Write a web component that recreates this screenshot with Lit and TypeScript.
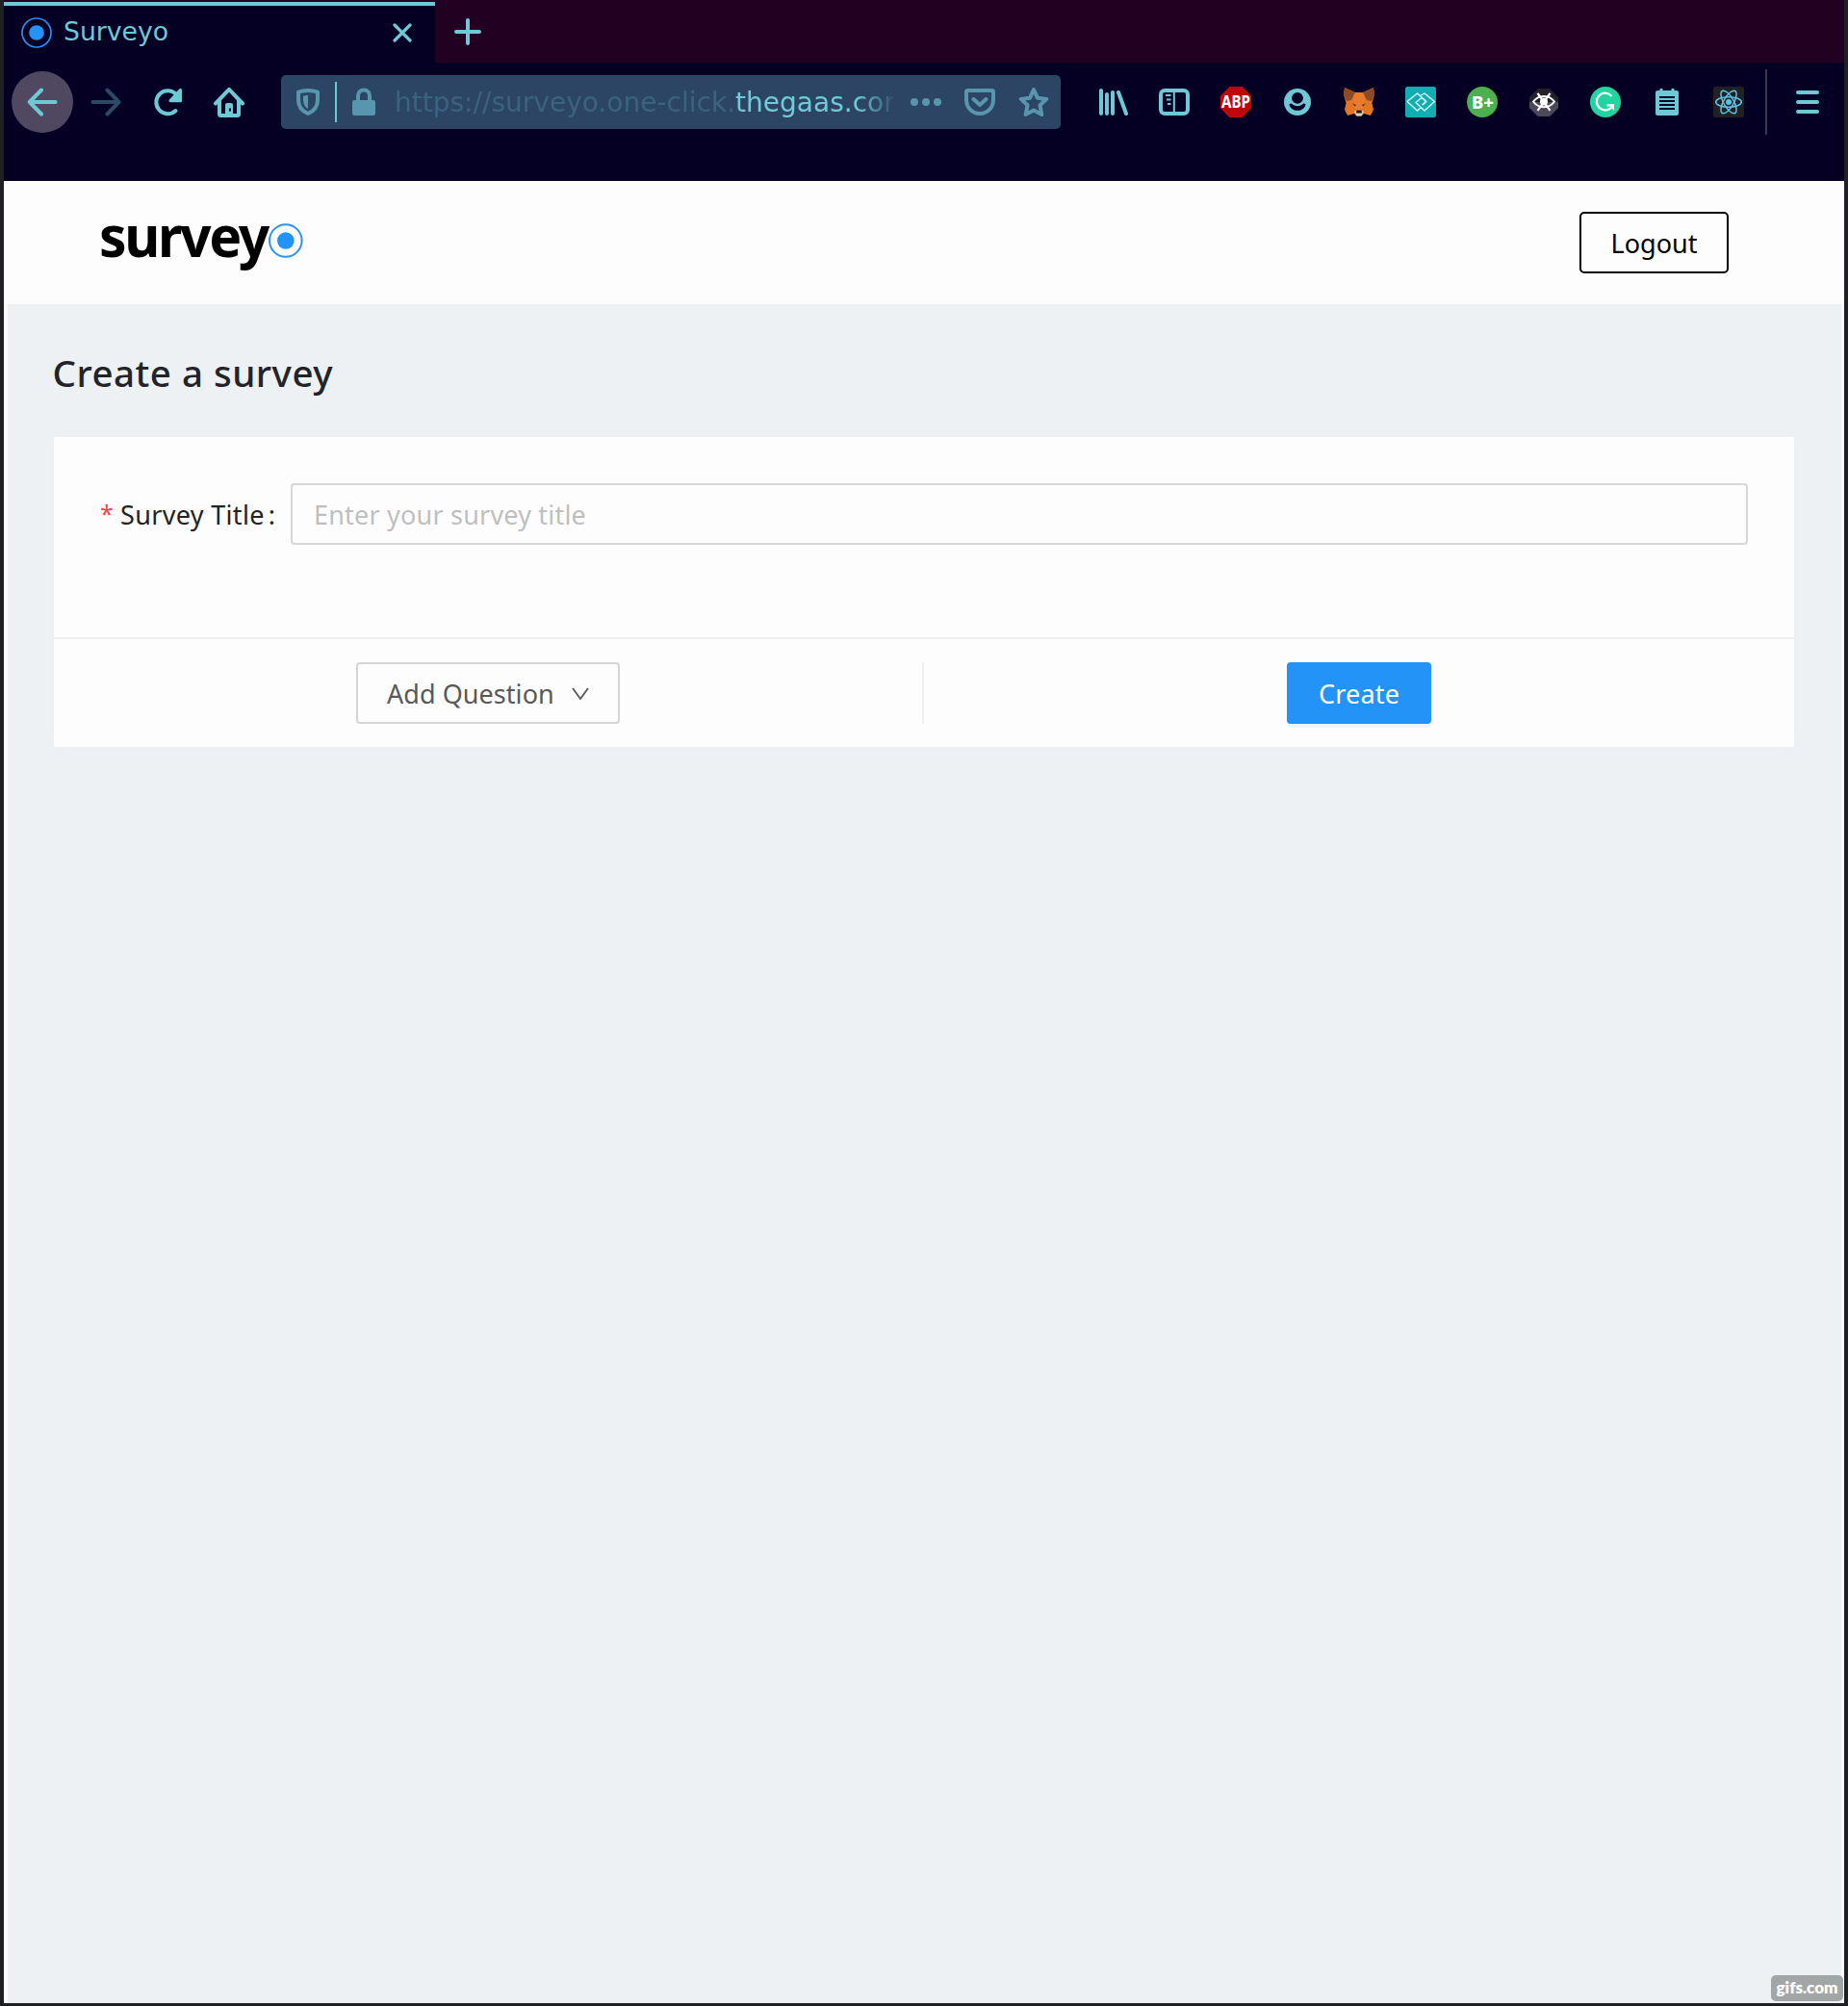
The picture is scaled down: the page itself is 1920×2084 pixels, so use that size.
import { LitElement, html, css, svg } from "lit";
import { customElement } from "lit/decorators.js";

const icon = (body: unknown) =>
  html`<svg width="32" height="32" viewBox="0 0 32 32" fill="none">${body}</svg>`;

const target = svg`<circle cx="16" cy="16" r="15" stroke="#2c8df0" stroke-width="1.700"/><circle cx="16" cy="16" r="7.800" fill="#2393f8"/>`;

const icons = {
  back: svg`<path d="M29.500 16H3.500M15 3.500L2.700 16L15 28.500" stroke="currentColor" stroke-width="4" stroke-linecap="round" stroke-linejoin="round"/>`,
  forward: svg`<path d="M2.500 16H28.500M17.500 3.500L29.500 16L17.500 28.500" stroke="currentColor" stroke-width="4" stroke-linecap="round" stroke-linejoin="round"/>`,
  reload: svg`<path d="M24.500 25A12 12 0 1 1 25.500 8.500" stroke="currentColor" stroke-width="4" stroke-linecap="round"/><path d="M31 3.500v11.500a1.200 1.200 0 0 1-1.200 1.200H19a1.600 1.600 0 0 1-1.100-2.700L28.200 2.500a1.600 1.600 0 0 1 2.800 1z" fill="currentColor"/>`,
  home: svg`<path d="M2 17.500L16 2.800L30 17.500" stroke="currentColor" stroke-width="4" stroke-linecap="round" stroke-linejoin="round"/><path d="M6 14v14.500a1.500 1.500 0 0 0 1.500 1.500h17a1.500 1.500 0 0 0 1.500-1.500V14" stroke="currentColor" stroke-width="4"/><path d="M12 30V19a2 2 0 0 1 2-2h4a2 2 0 0 1 2 2v11z" fill="currentColor"/><rect x="16" y="22.500" width="2" height="3" fill="#050023"/>`,
  shield: svg`<path d="M16 4c4 0 7.500.700 10 1.700v8.300c0 7-4 11.500-10 14-6-2.500-10-7-10-14V5.700C8.500 4.700 12 4 16 4z" stroke="currentColor" stroke-width="4" stroke-linejoin="round"/><path d="M16 9v14c-3-1.800-5-4.500-5-9V9.700C12.500 9.200 14 9 16 9z" fill="currentColor"/>`,
  lock: svg`<path d="M10 16V9.500a6 6 0 0 1 12 0V16" stroke="currentColor" stroke-width="4"/><rect x="4" y="14" width="24" height="16" rx="2" fill="currentColor"/>`,
  dots: svg`<circle cx="4" cy="16" r="4" fill="currentColor"/><circle cx="16" cy="16" r="4" fill="currentColor"/><circle cx="28" cy="16" r="4" fill="currentColor"/>`,
  pocket: svg`<path d="M3.500 4h25a1.500 1.500 0 0 1 1.500 1.500V14a14 14 0 0 1-28 0V5.500A1.500 1.500 0 0 1 3.500 4z" stroke="currentColor" stroke-width="4"/><path d="M9.500 13L16 19L22.500 13" stroke="currentColor" stroke-width="4" stroke-linecap="round" stroke-linejoin="round"/>`,
  star: svg`<path d="M16 3l4 8.800 9.300 1.100-6.800 6.400 1.800 9.700-8.300-4.500-8.300 4.500 1.800-9.700-6.800-6.400 9.300-1.100z" stroke="currentColor" stroke-width="4" stroke-linejoin="round"/>`,
  library: svg`<path d="M4 4v24M10 8v20M16 6v22M22 6l8 22" stroke="currentColor" stroke-width="4" stroke-linecap="round"/>`,
  sidebar: svg`<rect x="2" y="4" width="28" height="24" rx="4" stroke="currentColor" stroke-width="4"/><path d="M15.800 4v24" stroke="currentColor" stroke-width="2"/><path d="M7 9h5.500M8 13.500h4.500M9 18h3.500" stroke="currentColor" stroke-width="2"/>`,
  abp: svg`<path d="M9.500 0h13L32 9.500v13L22.500 32h-13L0 22.500v-13z" fill="#bd0808"/><text x="16" y="22" text-anchor="middle" textLength="30" lengthAdjust="spacingAndGlyphs" font-family="Noto Sans, sans-serif" font-weight="700" font-size="17" fill="#fff">ABP</text>`,
  account: svg`<circle cx="16" cy="16" r="14" fill="currentColor"/><circle cx="16" cy="11.800" r="5.900" fill="#050023"/><path d="M7.500 18.200c1.200-1.200 2.500-.800 3.500.300 3 2.300 7 2.300 10 0 1-1.100 2.300-1.500 3.500-.300-.500 4-4 6.600-8.500 6.600s-8-2.600-8.500-6.600z" fill="#050023"/>`,
  fox: svg`<path d="M1 1l11 5h8l11-5 1 7-2.500 9L31 24l-3 6-7-2-2.500 2.500h-5L11 28l-7 2-3-6 1.500-7L0 8z" fill="#e37625"/><path d="M1 1l11 5-4 8-5 1-3-7zM31 1L20 6l4 8 5 1 3-7z" fill="#8d4a26"/><path d="M12 6h8l2 11-3 8h-6l-3-8z" fill="#e87c2c"/><path d="M9 17.500l4 1.500-1 1.500zM23 17.500L19 19l1 1.500z" fill="#3a2a28"/><path d="M11 26l3-1.500h4L21 26l-2.500 4.500h-5z" fill="#d8cfc6"/><path d="M13.500 24.500h5l.500 3h-6z" fill="#1d1714"/>`,
  link: svg`<rect width="32" height="32" rx="2.500" fill="#12adb0"/><path d="M16.500 21.500L12.500 25 2 15.500 12.500 7 22 15.500 18 19M15.500 9.500L20 7l10.500 8.500L20 25l-9-8.500 6-5 4.500 4-4 3.500" stroke="#d5fbff" stroke-width="1.400" stroke-linejoin="round"/>`,
  bplus: svg`<circle cx="16" cy="16" r="16" fill="#4caf50"/><text x="16.500" y="22.500" text-anchor="middle" textLength="23" lengthAdjust="spacingAndGlyphs" font-family="Noto Sans, sans-serif" font-weight="800" font-size="18" fill="#fff">B+</text>`,
  eye: svg`<path d="M10 2h12l9 9v11l-9 9H10l-9-9V11z" fill="#24202b"/><path d="M1 16h30v6l-9 9H10l-9-9z" fill="#4c4859"/><path d="M5 15.500c5.500-7.500 16.500-7.500 22 0-5.500 7.500-16.500 7.500-22 0z" stroke="#fff" stroke-width="2"/><circle cx="16" cy="15.500" r="4" fill="#fff"/><path d="M9.500 6.800L22.500 24.800M22.500 6.800L9.500 24.800" stroke="#fff" stroke-width="2.300"/>`,
  grammar: svg`<circle cx="16" cy="16" r="16" fill="#21d5a1"/><path d="M22.500 10A8.800 8.800 0 1 0 23.500 19.500H17.500" stroke="#fff" stroke-width="2.200"/><path d="M18.500 18.200H25V25z" fill="#fff"/>`,
  notes: svg`<path d="M6 4h2.500V2h3v2h9V2h3v2H26a2 2 0 0 1 2 2v22a2 2 0 0 1-2 2H6a2 2 0 0 1-2-2V6a2 2 0 0 1 2-2z" fill="currentColor"/><path d="M8 11h16M8 15h16M8 19h16M8 23h16" stroke="#050023" stroke-width="2"/>`,
  react: svg`<rect width="32" height="32" rx="2.500" fill="#202124"/><g stroke="#61c0e0" stroke-width="1.500"><ellipse cx="16" cy="16" rx="13.300" ry="5.200"/><ellipse cx="16" cy="16" rx="13.300" ry="5.200" transform="rotate(60 16 16)"/><ellipse cx="16" cy="16" rx="13.300" ry="5.200" transform="rotate(120 16 16)"/></g><circle cx="16" cy="16" r="3" fill="#61c0e0"/>`,
  menu: svg`<path d="M6 6h20M6 16h20M6 26h20" stroke="currentColor" stroke-width="4" stroke-linecap="round"/>`,
};

@customElement("browser-chrome")
class BrowserChrome extends LitElement {
  static styles = css`
    :host { display: block; color: #6fc8d6; font-family: "DejaVu Sans", sans-serif; }
    svg { display: block; flex: none; }
    .tabs { display: flex; height: 65px; padding-top: 2px; box-sizing: border-box; background: #220022; }
    .tab { display: flex; align-items: center; width: 448px; height: 63px; box-sizing: border-box; border-top: 4px solid #6fc8d6; background: #050023; padding: 0 24px 3px 18px; }
    .name { flex: 1; margin-left: 12px; font-size: 26.67px; line-height: 32px; padding-bottom: 2px; }
    .plus { margin: 17px 0 0 20px; }
    .bar { background: #050023; height: 123px; padding-top: 1px; box-sizing: border-box; }
    .row { display: flex; align-items: center; height: 80px; padding-left: 8px; }
    .slot { display: grid; place-items: center; width: 64px; height: 64px; flex: none; }
    .round { border-radius: 50%; background: #4f4860; margin-right: 2px; }
    .dim { color: #2b4a66; }
    .url { display: flex; align-items: center; box-sizing: border-box; width: 810px; height: 56px; margin: 0 22px; padding-left: 12px; border-radius: 5px; background: #2c4565; color: #5796ac; }
    .sep { width: 2px; height: 42px; background: #6fc8d6; margin: 0 12px; }
    .addr { width: 518px; margin: 2px 6px 0 16px; overflow: hidden; white-space: nowrap; font-size: 28px; line-height: 40px; letter-spacing: 0.01px; color: #3a6380; -webkit-mask-image: linear-gradient(90deg, #000 480px, transparent 522px); mask-image: linear-gradient(90deg, #000 480px, transparent 522px); }
    .addr b { font-weight: 400; color: #70cad8; }
    .act { display: grid; place-items: center; width: 56px; }
    .rule { width: 2px; height: 68px; background: #383850; margin: 0 10px 0 6px; }
  `;
  render() {
    const ext = ["library", "sidebar", "abp", "account", "fox", "link", "bplus", "eye", "grammar", "notes", "react"] as const;
    return html`
      <div class="tabs">
        <div class="tab">
          ${icon(target)}
          <span class="name">Surveyo</span>
          <svg width="20" height="20" viewBox="0 0 20 20"><path d="M2 2L18 18M18 2L2 18" stroke="currentColor" stroke-width="3.200" stroke-linecap="round"/></svg>
        </div>
        <svg class="plus" width="28" height="28" viewBox="0 0 28 28"><path d="M14 2V26M2 14H26" stroke="currentColor" stroke-width="4" stroke-linecap="round"/></svg>
      </div>
      <div class="bar"><div class="row">
        <div class="slot round">${icon(icons.back)}</div>
        <div class="slot dim">${icon(icons.forward)}</div>
        <div class="slot">${icon(icons.reload)}</div>
        <div class="slot">${icon(icons.home)}</div>
        <div class="url">
          ${icon(icons.shield)}
          <div class="sep"></div>
          ${icon(icons.lock)}
          <div class="addr">https://surveyo.one-click.<b>thegaas.com</b></div>
          <div class="act">${icon(icons.dots)}</div>
          <div class="act">${icon(icons.pocket)}</div>
          <div class="act">${icon(icons.star)}</div>
        </div>
        ${ext.map((n) => html`<div class="slot">${icon(icons[n])}</div>`)}
        <div class="rule"></div>
        <div class="slot">${icon(icons.menu)}</div>
      </div></div>
    `;
  }
}

@customElement("survey-form")
class SurveyForm extends LitElement {
  static styles = css`
    :host { display: block; background: #fdfdfd; box-shadow: 0 0 10px 2px #eeeef2; }
    .field { display: flex; height: 208px; box-sizing: border-box; padding: 48px 48px 0 48px; }
    .star { width: 21px; color: #f0454a; font-size: 25px; line-height: 62px; }
    .label { color: #222326; line-height: 66px; letter-spacing: 0.33px; width: 177px; white-space: nowrap; }
    .label i { font-style: normal; margin-left: 4px; }
    .box { flex: 1; box-sizing: border-box; height: 64px; border: 2px solid #d7d7d7; border-radius: 4px; padding-left: 22px; line-height: 62px; color: #bfbfbf; letter-spacing: 0.2px; }
    .actions { display: grid; grid-template-columns: 902px 1fr; height: 114px; box-sizing: border-box; border-top: 2px solid #efefef; padding: 24px 0; }
    .half { display: flex; justify-content: center; }
    .half + .half { border-left: 2px solid #efefef; }
    .btn { box-sizing: border-box; height: 64px; line-height: 62px; border: 2px solid #d5d5d5; border-radius: 4px; white-space: nowrap; }
    .add { display: flex; width: 274px; padding-left: 30px; color: #595959; letter-spacing: 0.05px; }
    .add svg { margin: 24px 0 0 18px; }
    .create { width: 150px; text-align: center; border-color: #2393f8; background: #2393f8; color: #fff; letter-spacing: 0.2px; box-shadow: 0 4px 0 #eef5f7; }
  `;
  render() {
    return html`
      <div class="field">
        <span class="star">*</span>
        <span class="label">Survey Title<i>:</i></span>
        <div class="box">Enter your survey title</div>
      </div>
      <div class="actions">
        <div class="half"><div class="btn add">Add Question
          <svg width="18" height="14" viewBox="0 0 18 14"><path d="M1 1L9 12L17 1" fill="none" stroke="#595959" stroke-width="1.900"/></svg>
        </div></div>
        <div class="half"><div class="btn create">Create</div></div>
      </div>
    `;
  }
}

@customElement("app-root")
class AppRoot extends LitElement {
  static styles = css`
    :host { display: flex; flex-direction: column; position: relative; box-sizing: border-box; width: 1920px; height: 2084px; padding: 0 4px 3px; background: #1e2023; font: 27px "Noto Sans", sans-serif; overflow: hidden; }
    header { display: flex; justify-content: space-between; height: 128px; box-sizing: border-box; padding: 32px 120px 0 98px; background: #fdfdfd; }
    .logo { display: block; overflow: visible; }
    .logout { box-sizing: border-box; width: 155px; height: 64px; line-height: 62px; border: 2px solid #000; border-radius: 5px; text-align: center; color: #000; }
    main { flex: 1; box-sizing: border-box; padding: 44px 49px 0 48px; border-left: 4px solid #fbfbfb; border-right: 3px solid #fafafa; background: linear-gradient(90deg, #efeff4 8px, #edf1f4 10px); }
    h1 { margin: 0 0 39px -1.5px; font-size: 38.5px; font-weight: 500; line-height: 55px; letter-spacing: 0.5px; color: #222429; }
    .badge { position: absolute; left: 1840px; top: 2052px; width: 75px; height: 27px; box-sizing: border-box; border-radius: 5px; background: #a2a6a6; color: #fff; font: 800 17px/25px Lato, sans-serif; text-align: center; }
  `;
  render() {
    return html`
      <browser-chrome></browser-chrome>
      <header>
        <svg class="logo" width="216" height="64" viewBox="0 0 216 64">
          <text x="1" y="46.500" textLength="175" lengthAdjust="spacingAndGlyphs" letter-spacing="-2.500" font-family="Noto Sans, sans-serif" font-weight="700" font-size="60" fill="#000">survey</text>
          <circle cx="194.800" cy="30" r="16.800" fill="#fdfdfd" stroke="#2c93f3" stroke-width="2"/>
          <circle cx="194.800" cy="30" r="8.800" fill="#2393f8"/>
        </svg>
        <div class="logout">Logout</div>
      </header>
      <main>
        <h1>Create a survey</h1>
        <survey-form></survey-form>
      </main>
      <div class="badge">gifs.com</div>
    `;
  }
}
